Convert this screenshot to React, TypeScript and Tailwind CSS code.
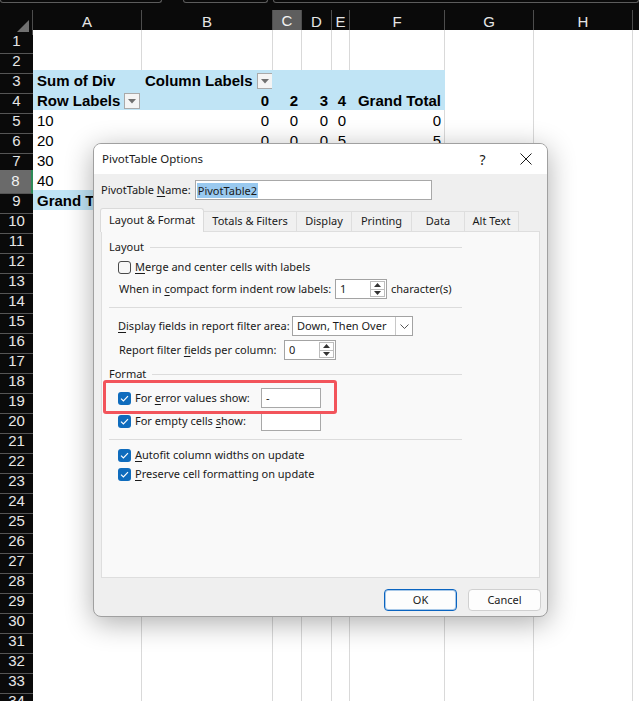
import React from 'react'

const GRID = 'grid grid-cols-[33px_109px_131px_29px_30px_18px_95px_89px_99px_60px]'
const COLS = ['A', 'B', 'C', 'D', 'E', 'F', 'G', 'H', 'I']

type Cell = { t: string; bold?: boolean; right?: boolean; dd?: boolean }

const nums = (a: string, vals: string[], bold = false): Cell[] => [
  { t: a, bold },
  ...vals.map(v => ({ t: v, right: true, bold })),
]

const DATA: Record<number, Cell[]> = {
  3: [{ t: 'Sum of Div', bold: true }, { t: 'Column Labels', bold: true, dd: true }],
  4: [
    { t: 'Row Labels', bold: true, dd: true },
    { t: '0', bold: true, right: true },
    { t: '2', bold: true, right: true },
    { t: '3', bold: true, right: true },
    { t: '4', bold: true, right: true },
    { t: 'Grand Total', bold: true, right: true },
  ],
  5: nums('10', ['0', '0', '0', '0', '0']),
  6: nums('20', ['0', '0', '0', '5', '5']),
  7: nums('30', ['0', '0', '0', '0', '0']),
  8: nums('40', ['0', '0', '0', '0', '0']),
  9: nums('Grand Total', ['0', '0', '0', '5', '5'], true),
}

const DropBtn = () => (
  <span className="ml-[4px] w-[16px] h-[16px] shrink-0 border border-[#a9a9a9] bg-[#f4f4f4] flex items-center justify-center">
    <svg width="8" height="5" viewBox="0 0 8 5">
      <path d="M0 0 H8 L4 4.5 Z" fill="#707070" />
    </svg>
  </span>
)

function cellCls(r: number, c: number) {
  const inPivot = r >= 3 && r <= 9 && c <= 5
  if (!inPivot) return 'bg-white border-r border-b border-[#d9d9d9]'
  const blue = r === 3 || r === 4 || r === 9
  const bg = blue ? 'bg-[#c0e4f5]' : 'bg-white'
  const right = c === 5 && r >= 5 ? 'border-r-[#d9d9d9]' : blue ? 'border-r-[#c0e4f5]' : 'border-r-white'
  const bottom = r === 4 || r === 8 ? 'border-b-[#8cc2df]' : blue ? 'border-b-[#c0e4f5]' : 'border-b-white'
  return `${bg} border-r border-b ${right} ${bottom}`
}

const Sheet = () => {
  const rows = Array.from({ length: 34 }, (_, i) => i + 1)
  return (
    <div className="w-[639px] h-[701px] overflow-hidden bg-[#0a0a0a]">
      {/* window strip */}
      <div className="h-[10px] flex items-start">
        <div className="w-[162px] h-[3px] border-x border-b border-[#5c5c5c] rounded-b-[5px]" />
        <div className="ml-[21px] w-[85px] h-[3px] border-x border-b border-[#5c5c5c] rounded-b-[5px]" />
        <div className="ml-[5px] flex-1 h-[3px] border-x border-b border-[#5c5c5c] rounded-b-[5px]" />
      </div>

      {/* column headers */}
      <div className={`${GRID} h-[20px]`}>
        <div className="relative border-r border-[#4d4d4d]">
          <svg className="absolute right-[3px] bottom-[3px]" width="12" height="12" viewBox="0 0 12 12">
            <path d="M12 0 V12 H0 Z" fill="#707070" />
          </svg>
        </div>
        {COLS.map(c => (
          <div
            key={c}
            className={
              c === 'C'
                ? 'flex items-center justify-center text-[15px] text-[#f2f2f2] bg-[#5e5e5e] border-r border-[#4d4d4d] border-b-2 border-b-[#2e8b57]'
                : 'flex items-center justify-center text-[15px] text-[#e6e6e6] border-r border-[#4d4d4d]'
            }
          >
            {c}
          </div>
        ))}
      </div>

      {rows.map(r => (
        <div key={r} className={`${GRID} h-[20px]`}>
          <div
            className={
              r === 8
                ? 'flex items-center justify-center text-[15px] text-[#f2f2f2] bg-[#6a6a6a] border-b border-[#555] border-r-2 border-r-[#2e8b57]'
                : 'flex items-center justify-center text-[15px] text-[#e6e6e6] border-b border-[#555]'
            }
          >
            {r}
          </div>
          {COLS.map((c, ci) => {
            const cell = DATA[r]?.[ci]
            return (
              <div
                key={c}
                className={`${cellCls(r, ci)} flex items-center overflow-hidden whitespace-nowrap text-[15px] text-black ${
                  cell?.right ? 'justify-end pr-[3px]' : ci === 0 ? 'pl-[4px]' : 'pl-[3px]'
                } ${cell?.bold ? 'font-bold' : ''}`}
              >
                {cell && <span>{cell.t}</span>}
                {cell?.dd && <DropBtn />}
              </div>
            )
          })}
        </div>
      ))}
    </div>
  )
}

const U = ({ children }: { children: React.ReactNode }) => (
  <span className="underline underline-offset-[2px] decoration-[1px]">{children}</span>
)

const Check = ({ on }: { on?: boolean }) =>
  on ? (
    <span className="w-[13px] h-[13px] shrink-0 rounded-[3px] bg-[#0f6cbd] flex items-center justify-center">
      <svg width="9" height="7" viewBox="0 0 9 7">
        <path d="M1 3.6 L3.4 6 L8 1.2" fill="none" stroke="white" strokeWidth="1.2" />
      </svg>
    </span>
  ) : (
    <span className="w-[13px] h-[13px] shrink-0 rounded-[3px] border border-[#4a4a4a] bg-[#f7f7f7]" />
  )

const Spin = ({ value, w }: { value: string; w: string }) => (
  <div className={`${w} h-[20px] border border-[#a3a3a3] bg-white flex`}>
    <div className="flex-1 pl-[4px] flex items-center">{value}</div>
    <div className="w-[15px] my-[1px] mr-[1px] border border-[#bdbdbd] flex flex-col">
      <div className="flex-1 flex items-center justify-center border-b border-[#bdbdbd]">
        <svg width="7" height="4" viewBox="0 0 7 4">
          <path d="M0 4 H7 L3.5 0 Z" fill="#333" />
        </svg>
      </div>
      <div className="flex-1 flex items-center justify-center">
        <svg width="7" height="4" viewBox="0 0 7 4">
          <path d="M0 0 H7 L3.5 4 Z" fill="#333" />
        </svg>
      </div>
    </div>
  </div>
)

const TextBox = ({ value }: { value?: string }) => (
  <div className="w-[60px] h-[20px] border border-[#a8a8a8] bg-white pl-[4px] flex items-center">{value}</div>
)

const SectionHead = ({ label, mt }: { label: string; mt: string }) => (
  <div className={`${mt} h-[16px] flex items-center pl-[7px] pr-[77px]`}>
    <span>{label}</span>
    <div className="ml-[6px] flex-1 h-px bg-[#dcdcdc]" />
  </div>
)

const Sep = ({ mt }: { mt: string }) => <div className={`${mt} ml-[7px] mr-[77px] h-px bg-[#dcdcdc]`} />

const Dialog = () => (
  <div className="absolute left-[93px] top-[143px] w-[455px] h-[474px] rounded-[8px] border border-[#a0a0a0] bg-[#efefef] shadow-[0_6px_28px_rgba(0,0,0,0.32)] overflow-hidden flex flex-col whitespace-nowrap font-['Noto_Sans','Segoe_UI',sans-serif] text-[11px] text-[#1a1a1a]">
    {/* title */}
    <div className="h-[30px] bg-white flex items-center pl-[8px] text-[11.5px]">
      <span className="flex-1">PivotTable Options</span>
      <div className="w-[43px] h-full flex items-center justify-center text-[14px]">?</div>
      <div className="w-[43px] h-full flex items-center justify-center">
        <svg width="12" height="12" viewBox="0 0 12 12">
          <path d="M0.5 0.5 L11.5 11.5 M11.5 0.5 L0.5 11.5" stroke="#1a1a1a" strokeWidth="1" />
        </svg>
      </div>
    </div>

    {/* name */}
    <div className="mt-[6px] h-[20px] flex items-center gap-[4px] pl-[7px] pr-[115px]">
      <span>
        PivotTable <U>N</U>ame:
      </span>
      <div className="flex-1 h-[20px] border border-[#a8a8a8] bg-white flex items-center pl-[1px]">
        <span className="bg-[#99c9ef] px-[1px] leading-[15px]">PivotTable2</span>
      </div>
    </div>

    {/* tabs */}
    <div className="mt-[8px] h-[23px] flex items-end pl-[6px]">
      <div className="relative z-10 -mb-px w-[104px] h-[24px] rounded-t-[3px] border border-b-0 border-[#dadada] bg-[#f9f9f9] flex items-center justify-center">
        Layout &amp; Format
      </div>
      {[
        ['Totals & Filters', 'w-[93px]'],
        ['Display', 'w-[55px]'],
        ['Printing', 'w-[60px]'],
        ['Data', 'w-[53px]'],
        ['Alt Text', 'w-[54px]'],
      ].map(([t, w]) => (
        <div key={t} className={`${w} h-[20px] border-t border-r border-[#dedede] bg-[#f0f0f0] flex items-center justify-center`}>
          {t}
        </div>
      ))}
    </div>

    {/* panel */}
    <div className="relative ml-[7px] w-[439px] h-[347px] border border-[#dedede] bg-[#f9f9f9] pt-[7px]">
      <SectionHead label="Layout" mt="mt-0" />
      <div className="mt-[3px] h-[18px] flex items-center pl-[16px] gap-[4px]">
        <Check />
        <span>
          <U>M</U>erge and center cells with labels
        </span>
      </div>
      <div className="mt-[3px] h-[20px] flex items-center pl-[17px]">
        <span className="w-[216px]">
          When in <U>c</U>ompact form indent row labels:
        </span>
        <Spin value="1" w="w-[52px]" />
        <span className="ml-[4px]">character(s)</span>
      </div>
      <Sep mt="mt-[8px]" />
      <div className="mt-[8px] h-[20px] flex items-center pl-[16px]">
        <span className="w-[174px]">
          <U>D</U>isplay fields in report filter area:
        </span>
        <div className="w-[121px] h-[20px] border border-[#a3a3a3] bg-white flex">
          <div className="flex-1 pl-[4px] flex items-center">Down, Then Over</div>
          <div className="w-[17px] border-l border-[#c8c8c8] flex items-center justify-center">
            <svg width="9" height="5" viewBox="0 0 9 5">
              <path d="M0.5 0.5 L4.5 4.5 L8.5 0.5" fill="none" stroke="#555" strokeWidth="1" />
            </svg>
          </div>
        </div>
      </div>
      <div className="mt-[4px] h-[20px] flex items-center pl-[17px]">
        <span className="w-[165px]">
          Report filter <U>f</U>ields per column:
        </span>
        <Spin value="0" w="w-[52px]" />
      </div>
      <SectionHead label="Format" mt="mt-[6px]" />
      <div className="mt-[6px] h-[20px] flex items-center pl-[16px]">
        <Check on />
        <span className="ml-[4px] w-[126px]">
          For <U>e</U>rror values show:
        </span>
        <TextBox value="-" />
      </div>
      <div className="mt-[3px] h-[20px] flex items-center pl-[16px]">
        <Check on />
        <span className="ml-[4px] w-[126px]">
          For empty cells <U>s</U>how:
        </span>
        <TextBox />
      </div>
      <Sep mt="mt-[8px]" />
      <div className="mt-[6px] h-[18px] flex items-center pl-[16px] gap-[4px]">
        <Check on />
        <span>
          <U>A</U>utofit column widths on update
        </span>
      </div>
      <div className="mt-[1px] h-[18px] flex items-center pl-[16px] gap-[4px]">
        <Check on />
        <span>
          <U>P</U>reserve cell formatting on update
        </span>
      </div>

      {/* highlight annotation */}
      <div className="absolute left-[1px] top-[148px] w-[234px] h-[34px] border-[3px] border-[#f2545b] rounded-[3px]" />
    </div>

    {/* buttons */}
    <div className="mt-[11px] flex justify-end pr-[6px] gap-[11px]">
      <button className="w-[73px] h-[22px] rounded-[4px] border border-[#0a64c0] shadow-[inset_0_0_0_1px_rgba(10,100,192,0.35)] bg-[#fdfdfd] flex items-center justify-center">
        OK
      </button>
      <button className="w-[73px] h-[22px] rounded-[4px] border border-[#d0d0d0] bg-[#fdfdfd] flex items-center justify-center">
        Cancel
      </button>
    </div>
  </div>
)

export default function App() {
  return (
    <div className="relative w-[639px] h-[701px] overflow-hidden font-['Liberation_Sans',Arial,sans-serif]">
      <Sheet />
      <Dialog />
    </div>
  )
}
